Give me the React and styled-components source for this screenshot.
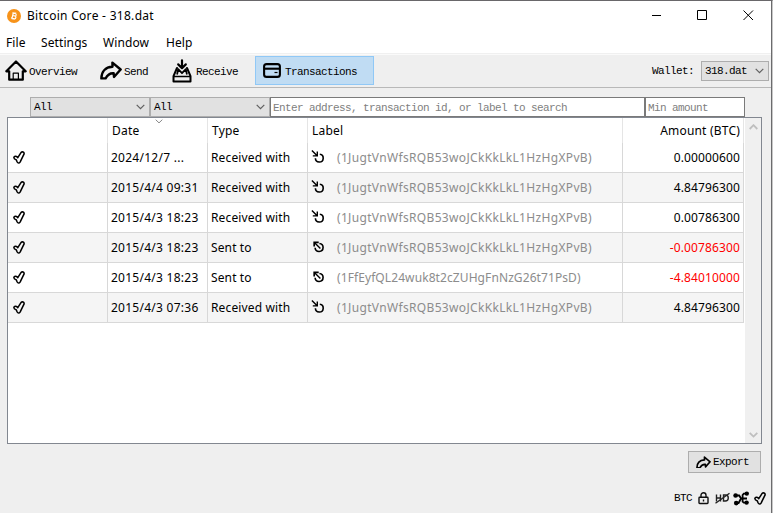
import React from 'react';
import styled, { createGlobalStyle } from 'styled-components';

const GlobalStyle = createGlobalStyle`
  * {
    box-sizing: border-box;
  }

  body {
    margin: 0;
    overflow: hidden;
    color: #000;
    font-family: 'Noto Sans', 'Open Sans', sans-serif;
    font-size: 12px;
  }
`;

const mono = `
  font-family: 'Liberation Mono', monospace;
  font-size: 11px;
  letter-spacing: -0.6px;
  line-height: 14px;
  white-space: pre;
`;

const Window = styled.div`
  width: 773px;
  height: 513px;
  display: flex;
  flex-direction: column;
  background: #efefef;
  border-top: 1px solid #69676a;
  border-right: 1px solid #c8c8c8;
  box-shadow: inset -1px 0 #6b6b6d;
`;

const TitleBar = styled.header`
  height: 29px;
  width: 771px;
  padding-left: 7px;
  display: flex;
  align-items: center;
  background: #fff;
`;

const Title = styled.span`
  margin-left: 6px;
  flex: 1;
  font-size: 12px;
  letter-spacing: 0.29px;
`;

const WindowButton = styled.span`
  width: 46px;
  height: 28px;
  display: flex;
  align-items: center;
  justify-content: center;
`;

const MenuBar = styled.nav`
  height: 24px;
  width: 771px;
  padding: 1px 0 0 6px;
  display: flex;
  align-items: center;
  background: #fff;
  border-bottom: 1px solid #f0f0f0;
`;

const MenuItem = styled.span`
  width: ${({ $width }) => $width}px;
  font-size: 12px;
  letter-spacing: 0.1px;
`;

const ToolBar = styled.div`
  height: 34px;
  width: 771px;
  padding: 1px 2px 1px 0;
  display: flex;
  align-items: center;
  border-top: 1px solid #fafafa;
  border-bottom: 1px solid #b8b8b8;
`;

const Tab = styled.div`
  ${mono}
  height: 29px;
  width: ${({ $width }) => $width}px;
  padding-left: ${({ $pad }) => $pad}px;
  display: flex;
  align-items: center;
  align-self: flex-start;
  border: 1px solid ${({ $active }) => ($active ? '#90c8f6' : 'transparent')};
  background: ${({ $active }) => ($active ? '#c0dcf3' : 'transparent')};
`;

const TabLabel = styled.span`
  margin: 2px 0 0 ${({ $gap }) => $gap}px;
`;

const WalletLabel = styled.span`
  ${mono}
  margin: 0 7px 0 auto;
`;

const Combo = styled.div`
  ${mono}
  width: ${({ $width }) => $width}px;
  height: 20px;
  padding: 0 4px 0 3px;
  display: flex;
  align-items: center;
  justify-content: space-between;
  background: #e1e1e1;
  border: 1px solid #adadad;
`;

const FilterRow = styled.div`
  height: 20px;
  margin: 9px 0 0 30px;
  display: flex;
`;

const Field = styled.input`
  ${mono}
  width: ${({ $width }) => $width}px;
  height: 20px;
  padding: 1px 2px 0;
  border: 1px solid #7a7a7a;
  border-radius: 0;
  background: #fff;
  outline: 0;

  &::placeholder {
    color: #808080;
    opacity: 1;
  }
`;

const TableFrame = styled.div`
  width: 755px;
  height: 327px;
  margin-left: 7px;
  display: flex;
  flex: none;
  background: #fff;
  border: 1px solid #828790;
`;

const Table = styled.div`
  flex: 1;
`;

const Columns = styled.div`
  display: grid;
  width: 736px;
  grid-template-columns: 100px 100px 100px 315px 121px;
`;

const HeaderRow = styled(Columns)`
  height: 25px;
`;

const HeaderCell = styled.div`
  position: relative;
  padding: 0 3px 1px 4px;
  display: flex;
  align-items: center;
  justify-content: ${({ $right }) => ($right ? 'flex-end' : 'flex-start')};
  border-right: 1px solid #e5e5e5;
  letter-spacing: 0.2px;
`;

const SortMark = styled.svg`
  position: absolute;
  top: 1px;
  left: 47px;
`;

const Row = styled(Columns)`
  height: 30px;
  background: ${({ $alt }) => ($alt ? '#f5f5f5' : '#fff')};
`;

const Cell = styled.div`
  padding: 0 ${({ $right }) => ($right ? 3 : 0)}px 1px 3px;
  display: flex;
  align-items: center;
  justify-content: ${({ $right }) => ($right ? 'flex-end' : 'flex-start')};
  border-right: 1px solid #d8d8d8;
  border-bottom: 1px solid #d8d8d8;
  color: ${({ $negative }) => ($negative ? '#f00' : '#000')};
  letter-spacing: ${({ $spacing }) => $spacing || 0}px;
  white-space: nowrap;

  svg {
    flex: none;
  }
`;

const StatusCell = styled(Cell)`
  padding-left: 5px;
`;

const Address = styled.span`
  margin-left: 11px;
  color: #8c8c8c;
  letter-spacing: ${({ $spacing }) => $spacing}px;
`;

const ScrollBar = styled.div`
  width: 16px;
  padding: 6px 0 5px;
  display: flex;
  flex-direction: column;
  align-items: center;
  justify-content: space-between;
  background: #f0f0f0;
`;

const Actions = styled.div`
  padding: 7px 11px 0 0;
  display: flex;
  justify-content: flex-end;
`;

const ExportButton = styled.button`
  ${mono}
  width: 73px;
  height: 22px;
  padding: 0 0 0 7px;
  display: flex;
  align-items: center;
  gap: 2px;
  color: #000;
  background: #e1e1e1;
  border: 1px solid #adadad;
`;

const StatusBar = styled.footer`
  ${mono}
  height: 18px;
  margin-top: 16px;
  padding-right: 6px;
  display: flex;
  align-items: center;
  justify-content: flex-end;
`;

const StatusItem = styled.span`
  display: flex;
  margin-right: ${({ $gap }) => $gap || 0}px;
`;

function Chevron({ up, color = '#606060' }) {
  return (
    <svg width="9" height="6" fill="none" stroke={color} strokeWidth={up === undefined ? 1.2 : 1.8}>
      <path d={up ? 'M.7 5 4.5 1.2 8.3 5' : 'M.7 .8 4.5 4.6 8.3 .8'} />
    </svg>
  );
}

function CoinLogo() {
  return (
    <svg width="14" height="14" viewBox="0 0 14 14">
      <circle cx="7" cy="7" r="7" fill="#f7931a" />
      <g fill="none" stroke="#fff" strokeWidth="1.2" transform="rotate(14 7 7)">
        <path d="M5.6 4v6M4.6 4.3h3a1.2 1.2 0 0 1 0 2.5h-2M7.8 6.8a1.4 1.4 0 0 1 0 2.8H4.6" />
        <path d="M6.2 3v1M7.8 3v1M6.2 9.8v1.1M7.8 9.8v1.1" strokeWidth=".7" />
      </g>
    </svg>
  );
}

function HouseIcon() {
  return (
    <svg width="22" height="21" fill="none" stroke="#000" strokeWidth="2.2" strokeLinejoin="round" strokeLinecap="round">
      <path d="M4.2 11.3H1.3L11 1.5l9.7 9.8h-2.9v8.4H4.2z" />
      <path d="M8.2 19v-5.8h5.2V19" strokeWidth="1.2" />
    </svg>
  );
}

function ArrowIcon({ size = 22 }) {
  return (
    <svg width={size} height={size * 0.86} viewBox="0 0 22 19" fill="none" stroke="#000" strokeWidth="2.4" strokeLinejoin="round">
      <path d="M12.4 1.6 20.7 8.5 14 16l-.3-3.7c-4-.4-6.1 1.4-8.1 5.2H1.3C1.4 10.8 5.2 6.2 12.5 5.8z" />
    </svg>
  );
}

function ReceiveIcon() {
  return (
    <svg width="20" height="24" fill="none" stroke="#000" strokeWidth="2" strokeLinejoin="round" strokeLinecap="round">
      <path d="M5 9 1.5 17.2v5.2h17v-5.2L15 9" />
      <path d="M1.8 17.6h16.4" strokeWidth="1.5" />
      <path d="M10 1.3v7.5M6.2 5.4l3.8 3.8 3.8-3.8" strokeWidth="2.2" />
      <path d="m5.2 14.8 1-4.6 3.8 4 3.8-4 1 4.6" strokeWidth="1.8" />
    </svg>
  );
}

function CardIcon() {
  return (
    <svg width="18" height="15" fill="none" stroke="#000" strokeWidth="2.1">
      <rect x="1.1" y="1.1" width="15.8" height="12.8" rx="2.5" />
      <path d="M1 5.7h16" />
      <path d="M11.5 9.5h3" strokeWidth="1.2" />
    </svg>
  );
}

function CheckIcon() {
  return (
    <svg width="12" height="13" fill="none" stroke="#000" strokeWidth="1.55" strokeLinejoin="round">
      <path d="M.9 6.2c1-1.3 2.9-1.2 3.7.6L8 1.6c1.2-1.4 3.3-.7 3.1 1.2L7.2 10.8c-1 1.6-2.3 1.6-3 .2L3.2 8.7C2.4 8.5.7 8.2.9 6.2z" />
    </svg>
  );
}

function InIcon() {
  return (
    <svg width="15" height="15" fill="none" stroke="#000" strokeWidth="1.6">
      <path d="M8.8 4.3a3.9 3.9 0 1 1-4.4 4" />
      <path d="m.9.6 5 5M6.3 1.4v4.5H1.8" strokeWidth="1.4" />
    </svg>
  );
}

function OutIcon() {
  return (
    <svg width="15" height="15" fill="none" stroke="#000" strokeWidth="1.6">
      <path d="M8.4 3.5a4 4 0 1 1-4.3 4.3" />
      <path d="m9.4 8.6-6-6" strokeWidth="1.4" />
      <path d="M3.2 6.6V2.3h4.5" strokeWidth="1.7" />
    </svg>
  );
}

function LockIcon() {
  return (
    <svg width="11" height="13" fill="none" stroke="#111" strokeWidth="1.4">
      <rect x="1" y="5.3" width="9" height="6.2" rx=".7" />
      <path d="M3 5.3V3.2a2.5 2.5 0 0 1 5 0v2.1M5.5 7.4v2" />
    </svg>
  );
}

function HdIcon() {
  return (
    <svg width="15" height="13" fill="none" stroke="#222" strokeWidth="1.4">
      <path d="M1.5 2.5v7M5.5 2.5v7M1.5 6h4M8.5 3h1.8c4 0 4 6 0 6H8.5z" />
      <path d="M.5 11.3 14.5 1.2" />
    </svg>
  );
}

function NetworkIcon() {
  return (
    <svg width="17" height="15" fill="none" stroke="#000" strokeWidth="1.8">
      <path d="M2.8 4.5h3.4L8 7.5h6M13.6 2.6H10.8L9.6 4v6.6l1.2 1h2.8M3.4 12h2.2L8 7.5" />
      <g fill="#000" stroke="none">
        <circle cx="2.6" cy="4.5" r="2.3" />
        <circle cx="3.2" cy="12.1" r="2.3" />
        <circle cx="13.8" cy="2.6" r="2.2" />
        <circle cx="13.6" cy="11.6" r="2.2" />
      </g>
    </svg>
  );
}

const MAIN_ADDRESS = '(1JugtVnWfsRQB53woJCkKkLkL1HzHgXPvB)';
const CHANGE_ADDRESS = '(1FfEyfQL24wuk8t2cZUHgFnNzG26t71PsD)';

const transactions = [
  { date: '2024/12/7 ...', type: 'Received with', address: MAIN_ADDRESS, amount: '0.00000600' },
  { date: '2015/4/4 09:31', type: 'Received with', address: MAIN_ADDRESS, amount: '4.84796300' },
  { date: '2015/4/3 18:23', type: 'Received with', address: MAIN_ADDRESS, amount: '0.00786300' },
  { date: '2015/4/3 18:23', type: 'Sent to', address: MAIN_ADDRESS, amount: '-0.00786300' },
  { date: '2015/4/3 18:23', type: 'Sent to', address: CHANGE_ADDRESS, amount: '-4.84010000' },
  { date: '2015/4/3 07:36', type: 'Received with', address: MAIN_ADDRESS, amount: '4.84796300' },
];

function TransactionRow({ tx, alt }) {
  const sent = tx.type === 'Sent to';
  return (
    <Row $alt={alt}>
      <StatusCell>
        <CheckIcon />
      </StatusCell>
      <Cell $spacing={0.26}>{tx.date}</Cell>
      <Cell $spacing={0.13}>{tx.type}</Cell>
      <Cell>
        {sent ? <OutIcon /> : <InIcon />}
        <Address $spacing={tx.address === MAIN_ADDRESS ? 0.33 : 0.09}>{tx.address}</Address>
      </Cell>
      <Cell $right $negative={sent} $spacing={0.12}>{tx.amount}</Cell>
    </Row>
  );
}

function App() {
  return (
    <>
      <GlobalStyle />
      <Window>
        <TitleBar>
          <CoinLogo />
          <Title>Bitcoin Core - 318.dat</Title>
          <WindowButton>
            <svg width="10" height="11"><path d="M1 5.5h10" stroke="#000" /></svg>
          </WindowButton>
          <WindowButton>
            <svg width="11" height="11"><path d="M.5 .5h9v9h-9z" fill="none" stroke="#000" /></svg>
          </WindowButton>
          <WindowButton>
            <svg width="11" height="11"><path d="m.5.5 9.5 9.5m0-9.5-9.5 9.5" stroke="#000" /></svg>
          </WindowButton>
        </TitleBar>
        <MenuBar>
          <MenuItem $width={35}>File</MenuItem>
          <MenuItem $width={62}>Settings</MenuItem>
          <MenuItem $width={63}>Window</MenuItem>
          <MenuItem $width={40}>Help</MenuItem>
        </MenuBar>
        <ToolBar>
          <Tab $width={95} $pad={4}><HouseIcon /><TabLabel $gap={2}>Overview</TabLabel></Tab>
          <Tab $width={72} $pad={4}><ArrowIcon /><TabLabel $gap={2}>Send</TabLabel></Tab>
          <Tab $width={88} $pad={4}><ReceiveIcon /><TabLabel $gap={4}>Receive</TabLabel></Tab>
          <Tab $width={119} $pad={7} $active><CardIcon /><TabLabel $gap={4}>Transactions</TabLabel></Tab>
          <WalletLabel>Wallet:</WalletLabel>
          <Combo $width={68}>318.dat<Chevron /></Combo>
        </ToolBar>
        <FilterRow>
          <Combo $width={120}>All<Chevron /></Combo>
          <Combo $width={120}>All<Chevron /></Combo>
          <Field $width={375} placeholder="Enter address, transaction id, or label to search" />
          <Field $width={100} placeholder="Min amount" />
        </FilterRow>
        <TableFrame>
          <Table>
            <HeaderRow>
              <HeaderCell />
              <HeaderCell>
                Date
                <SortMark width="8" height="5"><path d="m.7.7 3.3 3.2L7.3.7" fill="none" stroke="#888" /></SortMark>
              </HeaderCell>
              <HeaderCell>Type</HeaderCell>
              <HeaderCell>Label</HeaderCell>
              <HeaderCell $right>Amount (BTC)</HeaderCell>
            </HeaderRow>
            {transactions.map((tx, i) => (
              <TransactionRow key={i} tx={tx} alt={i % 2 === 1} />
            ))}
          </Table>
          <ScrollBar>
            <Chevron up color="#bfbfbf" />
            <Chevron up={false} color="#bfbfbf" />
          </ScrollBar>
        </TableFrame>
        <Actions>
          <ExportButton><ArrowIcon size={15} />Export</ExportButton>
        </Actions>
        <StatusBar>
          <StatusItem $gap={6}>BTC</StatusItem>
          <StatusItem $gap={6}><LockIcon /></StatusItem>
          <StatusItem $gap={3}><HdIcon /></StatusItem>
          <StatusItem $gap={4}><NetworkIcon /></StatusItem>
          <StatusItem><CheckIcon /></StatusItem>
        </StatusBar>
      </Window>
    </>
  );
}

export default App;
